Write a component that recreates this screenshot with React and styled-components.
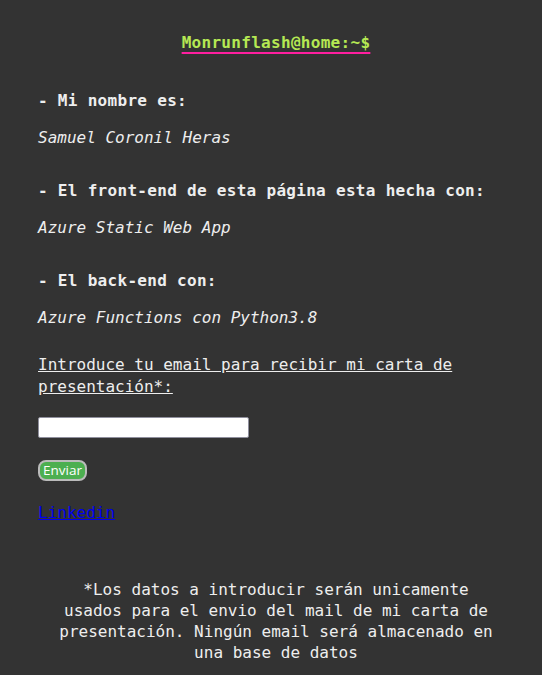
import React from "react"
import styled, { createGlobalStyle } from "styled-components"

const GlobalStyle = createGlobalStyle`
  html, body {
    margin: 0;
    background: #333;
  }
  body {
    padding: 8px;
    font-family: "DejaVu Sans Mono", "Liberation Mono", monospace;
    font-size: 16px;
    color: #eee;
  }
`

const Page = styled.main`
  padding: 0 20px 0 30px;
`

const Prompt = styled.h1`
  margin: 25px 0 0;
  text-align: center;
  font-size: 16px;
  line-height: 19px;
  font-weight: bold;
  letter-spacing: 0.3px;
  color: #b5e853;
  text-decoration: underline;
  text-decoration-color: #ff1fa0;
  text-decoration-thickness: 2px;
  text-underline-offset: 4px;
  text-decoration-skip-ink: auto;
`

const Section = styled.section`
  margin-top: ${(p) => p.$top}px;
`

const Label = styled.h2`
  margin: 0;
  font-size: 16px;
  line-height: 19px;
  font-weight: bold;
  letter-spacing: 0.3px;
`

const Value = styled.p`
  margin: 18px 0 0;
  font-style: italic;
  line-height: 19px;
`

const Form = styled.form`
  margin-top: 27px;
  display: flex;
  flex-direction: column;
  align-items: flex-start;
`

const FormLabel = styled.label`
  text-decoration: underline;
  line-height: 22px;
  max-width: 440px;
`

const EmailInput = styled.input`
  margin-top: 19px;
  width: 211px;
  height: 21px;
  box-sizing: border-box;
  border: 1px solid #8f8f9d;
  border-radius: 2px;
  background: #fff;
`

const SendButton = styled.button`
  margin-top: 22px;
  width: 49px;
  height: 21px;
  padding: 0;
  background: #4caf50;
  color: #fff;
  border: 2px solid #bbb;
  border-radius: 8px;
  font-family: "Open Sans", "Noto Sans", sans-serif;
  font-size: 13.5px;
  line-height: 15px;
`

const Social = styled.a`
  display: inline-block;
  margin-top: 22px;
  color: #0000ee;
  line-height: 19px;
`

const Note = styled.footer`
  margin: 57px auto 0;
  width: 440px;
  text-align: center;
  line-height: 21px;
`

export default function App() {
  return (
    <>
      <GlobalStyle />
      <Page>
        <Prompt>Monrunflash@home:~$</Prompt>

        <Section $top={39}>
          <Label>- Mi nombre es:</Label>
          <Value>Samuel Coronil Heras</Value>
        </Section>

        <Section $top={34}>
          <Label>- El front-end de esta página esta hecha con:</Label>
          <Value>Azure Static Web App</Value>
        </Section>

        <Section $top={34}>
          <Label>- El back-end con:</Label>
          <Value>Azure Functions con Python3.8</Value>
        </Section>

        <Form onSubmit={(e) => e.preventDefault()}>
          <FormLabel htmlFor="email">
            Introduce tu email para recibir mi carta de presentación*:
          </FormLabel>
          <EmailInput id="email" type="email" />
          <SendButton type="submit">Enviar</SendButton>
        </Form>

        <Social href="#">Linkedin</Social>

        <Note>
          *Los datos a introducir serán unicamente usados para el envio del mail de mi carta de presentación. Ningún email será almacenado en una base de datos
        </Note>
      </Page>
    </>
  )
}
